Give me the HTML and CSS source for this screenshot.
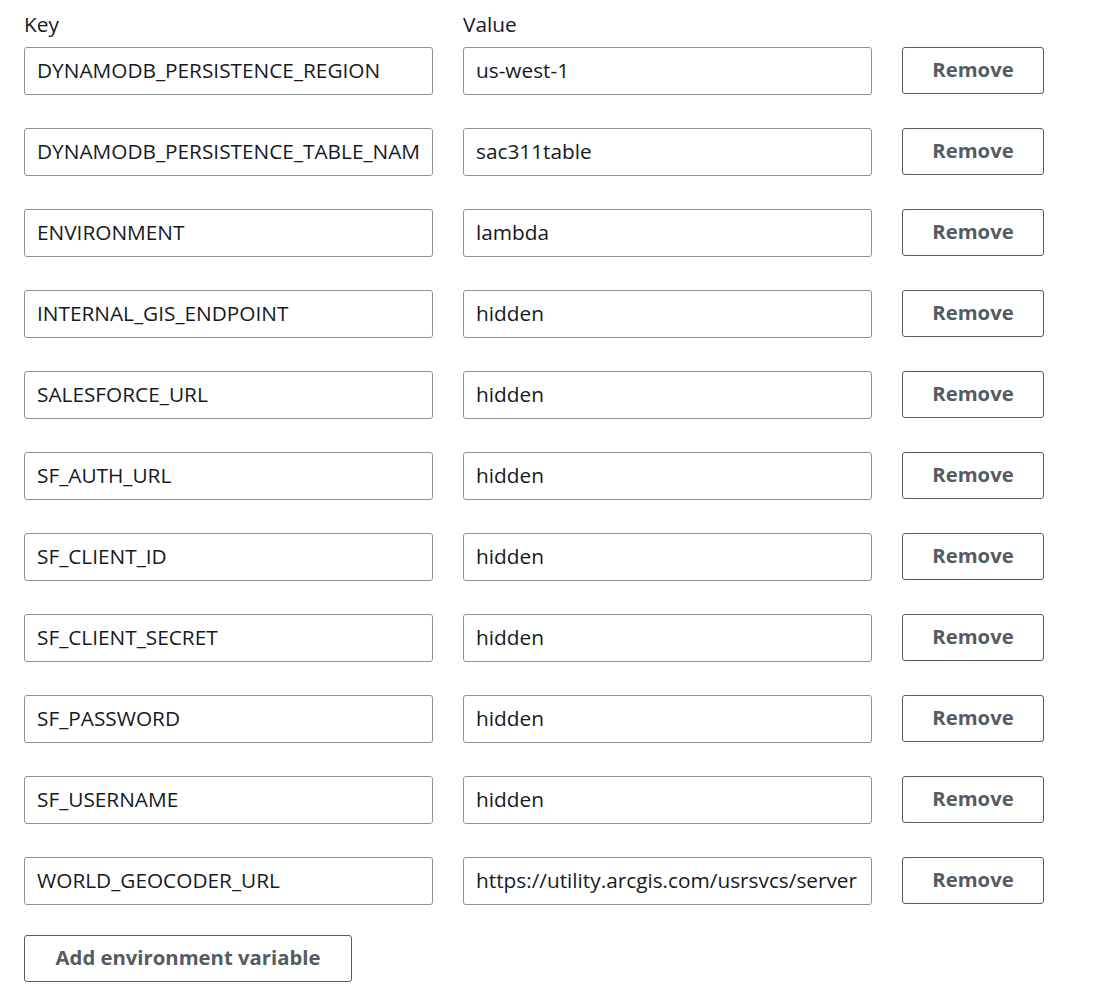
FILE: index.html
```html
<!DOCTYPE html>
<html>
<head>
<meta charset="utf-8">
<link rel="stylesheet" href="styles.css">
</head>
<body>
<div class="env">
  <div class="grid">
    <div class="label">Key</div>
    <div class="label">Value</div>
    <div></div>

    <input class="field" value="DYNAMODB_PERSISTENCE_REGION">
    <input class="field" value="us-west-1">
    <button class="btn">Remove</button>

    <input class="field" value="DYNAMODB_PERSISTENCE_TABLE_NAME">
    <input class="field" value="sac311table">
    <button class="btn">Remove</button>

    <input class="field" value="ENVIRONMENT">
    <input class="field" value="lambda">
    <button class="btn">Remove</button>

    <input class="field" value="INTERNAL_GIS_ENDPOINT">
    <input class="field" value="hidden">
    <button class="btn">Remove</button>

    <input class="field" value="SALESFORCE_URL">
    <input class="field" value="hidden">
    <button class="btn">Remove</button>

    <input class="field" value="SF_AUTH_URL">
    <input class="field" value="hidden">
    <button class="btn">Remove</button>

    <input class="field" value="SF_CLIENT_ID">
    <input class="field" value="hidden">
    <button class="btn">Remove</button>

    <input class="field" value="SF_CLIENT_SECRET">
    <input class="field" value="hidden">
    <button class="btn">Remove</button>

    <input class="field" value="SF_PASSWORD">
    <input class="field" value="hidden">
    <button class="btn">Remove</button>

    <input class="field" value="SF_USERNAME">
    <input class="field" value="hidden">
    <button class="btn">Remove</button>

    <input class="field" value="WORLD_GEOCODER_URL">
    <input class="field" value="https://utility.arcgis.com/usrsvcs/servers/geocode">
    <button class="btn">Remove</button>
  </div>
  <button class="btn add">Add environment variable</button>
</div>
</body>
</html>
```
FILE: styles.css
```css
html, body {
  margin: 0;
  padding: 0;
  background: #ffffff;
}
body {
  font-family: "Open Sans", "Noto Sans", Arial, sans-serif;
  color: #16191f;
}
.env {
  padding: 12px 24px 0 24px;
}
.grid {
  display: grid;
  grid-template-columns: 409px 409px 142px;
  column-gap: 30px;
  row-gap: 33px;
  align-items: start;
}
.label {
  font-size: 20.8px;
  line-height: 24px;
  margin-bottom: -22px;
  color: #16191f;
}
.field {
  box-sizing: border-box;
  width: 409px;
  height: 48px;
  margin: 0;
  padding: 0 13px 2px 12px;
  border: 1px solid #879596;
  border-radius: 3px;
  font-family: inherit;
  font-size: 20.8px;
  color: #16191f;
  background: #fff;
  outline: none;
}
.btn {
  box-sizing: border-box;
  height: 47px;
  margin: 0;
  padding: 0 20px 3px 20px;
  border: 1px solid #545b64;
  border-radius: 3px;
  background: #fff;
  color: #545b64;
  font-family: inherit;
  font-weight: 700;
  font-size: 20.3px;
  cursor: pointer;
}
.add {
  margin-top: 30px;
  width: 328px;
}
```
